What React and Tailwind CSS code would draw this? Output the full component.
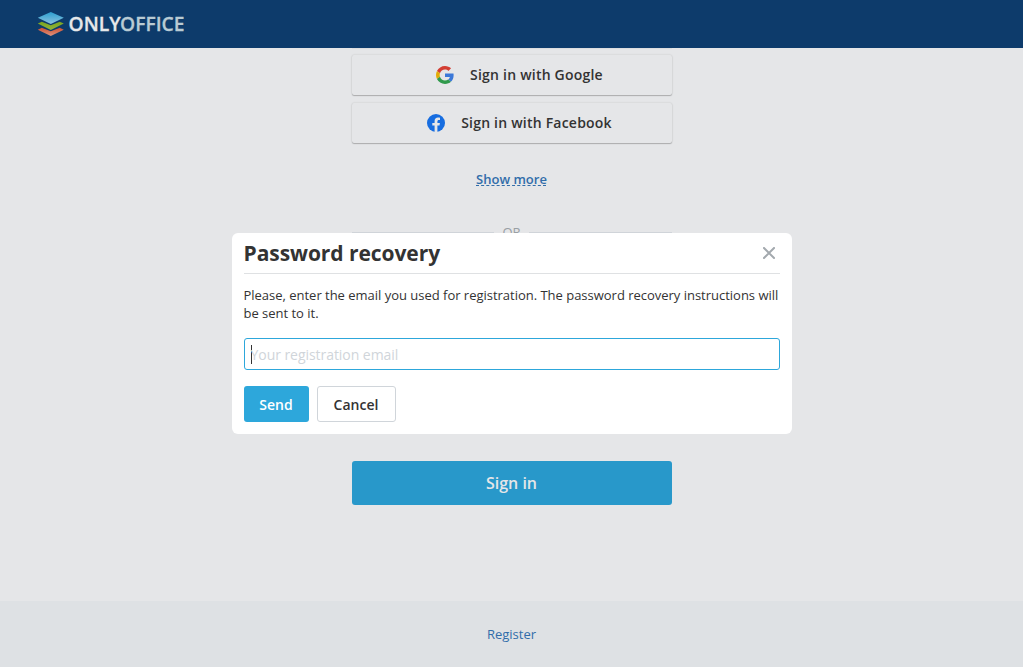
function Logo() {
  return (
    <svg className="block" width="152" height="34" viewBox="0 -4 152 34" role="img" aria-label="ONLYOFFICE">
      <defs>
        <linearGradient id="layer-blue" x1="0" y1="0" x2="0" y2="1">
          <stop offset="0" stopColor="#2c9fd0" />
          <stop offset="1" stopColor="#8cc3de" />
        </linearGradient>
        <linearGradient id="layer-green" x1="0" y1="0" x2="0" y2="1">
          <stop offset="0" stopColor="#7aa51f" />
          <stop offset="1" stopColor="#93b53a" />
        </linearGradient>
        <linearGradient id="layer-red" x1="0" y1="0" x2="0" y2="1">
          <stop offset="0" stopColor="#cf5030" />
          <stop offset="1" stopColor="#dd9480" />
        </linearGradient>
      </defs>
      <path d="M1.8 18.7 5.8 16.8 14.8 20.3 23.8 16.8 27.8 18.7 14.8 25z" fill="url(#layer-red)" />
      <path d="M1.8 12.6 5.8 10.7 14.8 14.2 23.8 10.7 27.8 12.6 14.8 19z" fill="url(#layer-green)" />
      <path d="M1.8 6.8 14.8 1 27.8 6.8 14.8 13z" fill="url(#layer-blue)" />
      <text x="32.6" y="20.2" className="font-['Open_Sans'] text-[20.5px] font-semibold" fill="#e6e8ea" stroke="#e6e8ea" strokeWidth=".3" textLength="52" lengthAdjust="spacingAndGlyphs">ONLY</text>
      <text x="84" y="20.2" className="font-['Open_Sans'] text-[20.5px] font-semibold" fill="#b9cbd4" stroke="#b9cbd4" strokeWidth=".3" textLength="64.5" lengthAdjust="spacingAndGlyphs">OFFICE</text>
    </svg>
  );
}

function GoogleIcon() {
  return (
    <svg width="18" height="18" viewBox="0 0 48 48">
      <path fill="#d33e33" d="M24 9.5c3.54 0 6.71 1.22 9.21 3.6l6.85-6.85C35.9 2.38 30.47 0 24 0 14.62 0 6.51 5.38 2.56 13.22l7.98 6.19C12.43 13.72 17.74 9.5 24 9.5z" />
      <path fill="#3b78d8" d="M46.98 24.55c0-1.57-.15-3.09-.38-4.55H24v9.02h12.94c-.58 2.96-2.26 5.48-4.78 7.18l7.73 6c4.51-4.18 7.09-10.36 7.09-17.65z" />
      <path fill="#e2ab06" d="M10.53 28.59A14.5 14.5 0 0 1 9.77 24c0-1.6.27-3.14.76-4.59l-7.98-6.19A23.9 23.9 0 0 0 0 24c0 3.88.92 7.54 2.56 10.78z" />
      <path fill="#309a4c" d="M24 48c6.48 0 11.93-2.13 15.89-5.81l-7.73-6c-2.15 1.45-4.92 2.3-8.16 2.3-6.26 0-11.57-4.22-13.47-9.91l-7.98 6.19C6.51 42.62 14.62 48 24 48z" />
    </svg>
  );
}

function FacebookIcon() {
  return (
    <svg width="18" height="18" viewBox="0 0 18 18">
      <circle cx="9" cy="9" r="9" fill="#176de0" />
      <path fill="#e5e6e8" d="M7.6 18v-6.4H5.3V9h2.3V7c0-2.3 1.3-3.5 3.4-3.5 1 0 2 .2 2 .2v2.2h-1.1c-1.1 0-1.5.7-1.5 1.4V9h2.5l-.4 2.6h-2.1V18z" />
    </svg>
  );
}

const socialShadow = "shadow-[0_1px_1px_rgba(0,0,0,0.22),0_0_2px_rgba(0,0,0,0.16)]";

function SocialButton({ icon, children }) {
  return (
    <button className={`flex h-10 w-full shrink-0 items-center justify-center gap-4 rounded-xs pl-4 text-[14px] font-semibold text-[#333] ${socialShadow}`}>
      {icon}
      <span className="pb-0.5 tracking-[0.218px]">{children}</span>
    </button>
  );
}

function RecoveryDialog() {
  return (
    <div className="absolute inset-0 flex items-center justify-center">
      <section role="dialog" aria-label="Password recovery" className="h-[201px] w-[560px] rounded-md bg-white px-3 text-[#333]">
        <header className="flex h-[41px] items-center justify-between border-b border-[#dfe1e3]">
          <h1 className="text-[21px] leading-7 font-bold tracking-[-0.06px]">Password recovery</h1>
          <button aria-label="Close" className="mr-[5px]">
            <svg width="12" height="12" viewBox="0 0 12 12" fill="none" stroke="#a3a9ae" strokeWidth="2">
              <path d="M.3.3 11.7 11.7M11.7.3.3 11.7" />
            </svg>
          </button>
        </header>
        <p className="pt-3 text-[13px] leading-[18px] tracking-[-0.015px]">
          Please, enter the email you used for registration. The password recovery instructions will be sent to it.
        </p>
        <div className="mt-4 flex h-8 items-center rounded-[3px] border border-[#2da7db] px-1.5">
          <span className="h-[19px] w-px bg-[#333]" />
          <span className="-ml-px text-[14px] tracking-[-0.05px] text-[#d0d5da]">Your registration email</span>
        </div>
        <div className="mt-4 flex gap-2 text-[14px] font-semibold">
          <button className="h-9 w-[65px] rounded-[3px] bg-[#2da7db] text-white">Send</button>
          <button className="h-9 w-[79px] rounded-[3px] border border-[#d0d5da]">Cancel</button>
        </div>
      </section>
    </div>
  );
}

export default function App() {
  return (
    <div className="relative flex h-screen flex-col overflow-hidden bg-[#e5e6e8] font-['Open_Sans',sans-serif]">
      <header className="flex h-12 shrink-0 items-center bg-[#0d3b6b] pl-9">
        <Logo />
      </header>
      <main className="flex min-h-0 flex-1 flex-col items-center overflow-hidden">
        <div className="flex w-80 flex-1 flex-col items-center">
          <div className="h-px w-full shrink-0 bg-[#dcdddf]" />
          <div className="mt-1.5 flex w-full flex-col gap-2">
            <SocialButton icon={<GoogleIcon />}>Sign in with Google</SocialButton>
            <SocialButton icon={<FacebookIcon />}>Sign in with Facebook</SocialButton>
          </div>
          <a className="mt-[27px] text-[13px] leading-[18px] font-semibold text-[#316daa] underline decoration-dashed decoration-1 underline-offset-1 [text-decoration-skip-ink:none]">Show more</a>
          <div className="mt-[34px] flex h-5 w-full items-center gap-2 text-[13px] text-[#999fa4]">
            <span className="h-px flex-1 bg-[#d0d4d9]" />
            <span className="leading-5">OR</span>
            <span className="h-px flex-1 bg-[#d0d4d9]" />
          </div>
          <button className="mt-[219px] h-11 w-full shrink-0 rounded-[3px] bg-[#2898ca] text-[16px] font-semibold text-[#e5e6e8]">Sign in</button>
        </div>
      </main>
      <footer className="flex h-[66px] shrink-0 items-center justify-center bg-[#dee1e4] pt-0.5 text-[13px] text-[#316daa]">
        <a>Register</a>
      </footer>
      <RecoveryDialog />
    </div>
  );
}
